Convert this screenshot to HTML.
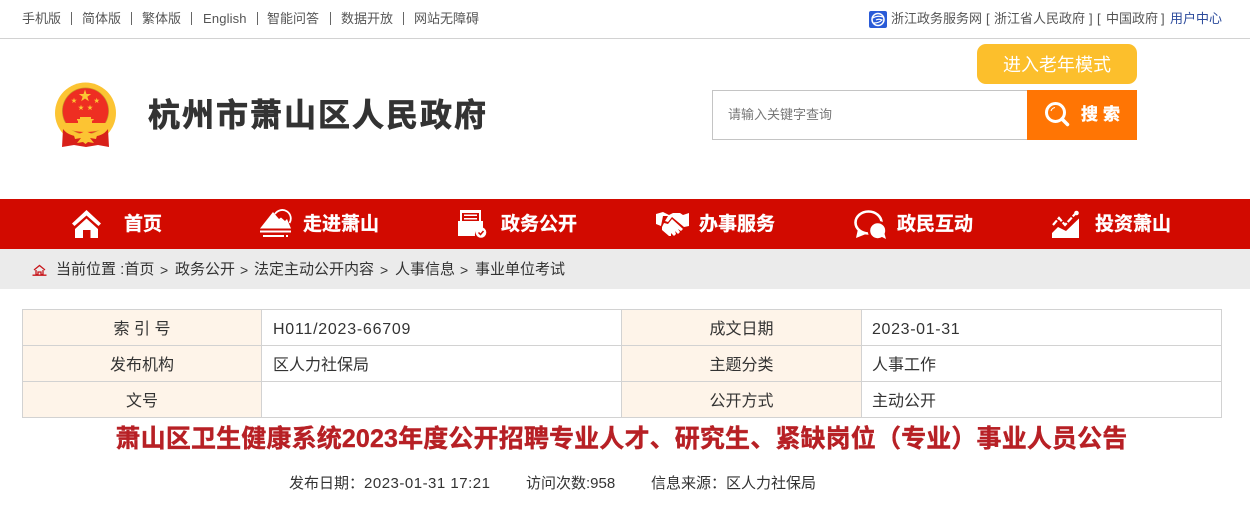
<!DOCTYPE html>
<html lang="zh-CN">
<head>
<meta charset="utf-8">
<title>杭州市萧山区人民政府</title>
<style>
html,body{margin:0;padding:0;background:#fff;}
body{width:1250px;height:515px;position:relative;overflow:hidden;font-family:"Liberation Sans","Noto Sans CJK SC",sans-serif;color:#333;}
.a{position:absolute;white-space:nowrap;}
.t{font-size:13px;line-height:18px;top:10px;color:#555;}
.sep{position:absolute;top:12px;width:1px;height:13px;background:#666;}
.nav{font-size:19px;font-weight:700;color:#fff;line-height:26px;top:212px;-webkit-text-stroke:.3px #fff;}
.bc{font-size:15px;line-height:20px;top:260px;color:#333;}
.c{position:absolute;box-sizing:border-box;font-size:16px;line-height:39px;height:35px;color:#333;white-space:nowrap;}
.l{background:#fef4e9;text-align:center;}
.v{padding-left:10px;letter-spacing:.65px;}
.h{position:absolute;background:#d2d2d2;}
.m{font-size:15px;line-height:20px;top:474px;color:#333;}
</style>
</head>
<body>
<div class="a t" style="left:22px">手机版</div><div class="sep" style="left:71px"></div>
<div class="a t" style="left:82px">简体版</div><div class="sep" style="left:131px"></div>
<div class="a t" style="left:142px">繁体版</div><div class="sep" style="left:191px"></div>
<div class="a t" style="left:203px;letter-spacing:.15px">English</div><div class="sep" style="left:257px"></div>
<div class="a t" style="left:267px">智能问答</div><div class="sep" style="left:330px"></div>
<div class="a t" style="left:341px">数据开放</div><div class="sep" style="left:403px"></div>
<div class="a t" style="left:414px">网站无障碍</div>

<svg class="a" style="left:869px;top:11px" width="18" height="17" viewBox="0 0 18 17"><rect width="18" height="17" rx="2" fill="#2a5bd7"/><circle cx="9" cy="8.500" r="6" fill="none" stroke="#fff" stroke-width="1.500"/><path d="M4 7c3-2 7-2 10-1M5 12c3 0 6-1 8-3-2-1-4-1-6 0" fill="none" stroke="#fff" stroke-width="1.200"/></svg>
<div class="a t" style="left:891px">浙江政务服务网</div>
<div class="a t" style="left:986px">[</div>
<div class="a t" style="left:994px">浙江省人民政府</div>
<div class="a t" style="left:1089px">]</div>
<div class="a t" style="left:1097px">[</div>
<div class="a t" style="left:1106px">中国政府</div>
<div class="a t" style="left:1161px">]</div>
<div class="a t" style="left:1170px;color:#2b4a9b">用户中心</div>
<div class="a" style="left:0;top:38px;width:1250px;height:1px;background:#d2d2d2"></div>

<svg class="a" style="left:54px;top:82px" width="64" height="68" viewBox="0 0 64 68">
<circle cx="31.500" cy="31" r="30.500" fill="#fcc433"/>
<circle cx="31.500" cy="29" r="23.500" fill="#c8972a"/>
<circle cx="31.500" cy="29" r="22.800" fill="#ee2e22"/>
<path d="M9.500 41 H53.500 C51 47 44 50 31.500 50 C19 50 12 47 9.500 41Z" fill="#fcc433"/>
<path d="M23 37h17l-1 1.500h-1v3h-14v-3h-1z" fill="#fcc433"/>
<path d="M26 35h11v2H26z" fill="#fcc433"/>
<polygon transform="translate(31 14) scale(6.500)" fill="#fcc433" points="0,-1 .225,-.309 .951,-.309 .363,.118 .588,.809 0,.382 -.588,.809 -.363,.118 -.951,-.309 -.225,-.309"/>
<polygon transform="translate(20 18.700) scale(3)" fill="#fcc433" points="0,-1 .225,-.309 .951,-.309 .363,.118 .588,.809 0,.382 -.588,.809 -.363,.118 -.951,-.309 -.225,-.309"/>
<polygon transform="translate(42.700 18.700) scale(3)" fill="#fcc433" points="0,-1 .225,-.309 .951,-.309 .363,.118 .588,.809 0,.382 -.588,.809 -.363,.118 -.951,-.309 -.225,-.309"/>
<polygon transform="translate(27 25.700) scale(3)" fill="#fcc433" points="0,-1 .225,-.309 .951,-.309 .363,.118 .588,.809 0,.382 -.588,.809 -.363,.118 -.951,-.309 -.225,-.309"/>
<polygon transform="translate(36 25.700) scale(3)" fill="#fcc433" points="0,-1 .225,-.309 .951,-.309 .363,.118 .588,.809 0,.382 -.588,.809 -.363,.118 -.951,-.309 -.225,-.309"/>
<path d="M9 47 C12 51 16 53 21 54 L43 54 C48 53 51 51 54 47 L55 65 L44 63 L32 65 L20 63 L8 65Z" fill="#d8201a"/>
<path d="M19 50 L25 52 L31.500 49 L38 52 L44 50 L42 57 L36 56 L40 61 L34 60 L31.500 62 L29 60 L23 61 L27 56 L21 57Z" fill="#fcc433"/>
</svg>
<div class="a" style="left:148px;top:93px;font-size:32px;line-height:44px;font-weight:700;letter-spacing:2px;color:#333;-webkit-text-stroke:.7px #333">杭州市萧山区人民政府</div>

<div class="a" style="left:977px;top:44px;width:160px;height:40px;border-radius:9px;background:#fcbf2c;color:#fff;font-size:18px;line-height:42px;text-align:center">进入老年模式</div>
<div class="a" style="left:712px;top:90px;width:316px;height:50px;box-sizing:border-box;border:1px solid #c4c4c4;border-right:0"></div>
<div class="a" style="left:728px;top:106px;font-size:13px;line-height:18px;color:#777">请输入关键字查询</div>
<div class="a" style="left:1027px;top:90px;width:110px;height:50px;background:#ff7504"></div>
<svg class="a" style="left:1044px;top:101px" width="26" height="26" viewBox="0 0 26 26"><circle cx="11.500" cy="11.500" r="9" fill="none" stroke="#fff" stroke-width="3"/><path d="M18 18l5.500 5.500" stroke="#fff" stroke-width="3.500" stroke-linecap="round"/><path d="M7 10a5 5 0 0 1 4-3.500" stroke="#fff" fill="none" stroke-width="1"/></svg>
<div class="a" style="left:1081px;top:103px;font-size:17px;line-height:24px;font-weight:700;color:#fff;letter-spacing:5px;-webkit-text-stroke:.4px #fff">搜索</div>

<div class="a" style="left:0;top:199px;width:1250px;height:50px;background:#d20a00"></div>

<svg class="a" style="left:71px;top:209px" width="32" height="30" viewBox="0 0 32 30" fill="#fff"><path d="M15.500 1 L30 14.500 L27.500 17 L15.500 6.500 L3.500 17 L1 14.500Z"/><path d="M15.500 9.500 L27 20 V29 H19.500 V21 H12 V29 H4 V20Z"/></svg>
<div class="a nav" style="left:124px">首页</div>

<svg class="a" style="left:259px;top:209px" width="34" height="30" viewBox="0 0 34 30" fill="#fff"><path d="M1 19.500 L14 3 L20 10 L22 8.500 L26 12 L28 10 L32 19.500Z"/><path d="M16 5 A8.500 8.500 0 1 1 30.500 14" fill="none" stroke="#fff" stroke-width="1.800"/><rect x="1" y="21.500" width="31" height="2"/><rect x="4" y="26" width="21" height="2"/><rect x="27" y="26" width="2" height="2"/></svg>
<div class="a nav" style="left:303px">走进萧山</div>

<svg class="a" style="left:458px;top:209px" width="30" height="30" viewBox="0 0 30 30"><path d="M0 12 H2 V1 H23 V12 H25 V19 A7 7 0 0 0 17 27 H0Z" fill="#fff"/><rect x="4" y="4" width="17" height="8" fill="#d20a00"/><rect x="6" y="5.500" width="13" height="1.500" fill="#fff"/><rect x="6" y="9" width="13" height="1.500" fill="#fff"/><circle cx="23" cy="23.500" r="5.300" fill="#fff"/><path d="M20.500 23.500l2 2 3-3.500" stroke="#d20a00" stroke-width="1.500" fill="none"/></svg>
<div class="a nav" style="left:501px">政务公开</div>

<svg class="a" style="left:656px;top:211px" width="34" height="26" viewBox="0 0 34 26" fill="#fff"><path d="M0 3 L7 1 L13 4 L17 2 L24 2 L27 4 L33 2 V15 L28 16 L16 6 L12 11 L9 10 L12 5 L7 5 L5 15 L0 13Z"/><path d="M6 16 L8 12 L12 13 L16 8 L27 18 L25 20 L22 18 L24 21 L22 23 L19 20 L20 23 L18 25 L15 22 L15 25 L13 25 L6 19Z"/></svg>
<div class="a nav" style="left:699px">办事服务</div>

<svg class="a" style="left:854px;top:210px" width="33" height="30" viewBox="0 0 33 30"><ellipse cx="14.500" cy="12.500" rx="13" ry="11" fill="none" stroke="#fff" stroke-width="2.600"/><path d="M4 19 L2 28 L12 24Z" fill="#fff"/><circle cx="23.700" cy="20.700" r="10" fill="#d20a00"/><circle cx="23.700" cy="20.700" r="7.500" fill="#fff"/><path d="M26 26 L32 29 L30 22Z" fill="#fff"/></svg>
<div class="a nav" style="left:897px">政民互动</div>

<svg class="a" style="left:1052px;top:210px" width="28" height="29" viewBox="0 0 28 29"><path d="M0 23 L6 17 L14 21 L27 8.500 V28 H0Z" fill="#fff"/><path d="M1 15 L7 8 L13 15 L23 4" stroke="#fff" stroke-width="2.200" fill="none" stroke-dasharray="6 1.500"/><circle cx="24.500" cy="3" r="2.300" fill="#fff"/></svg>
<div class="a nav" style="left:1095px">投资萧山</div>

<div class="a" style="left:0;top:249px;width:1250px;height:40px;background:#ebebeb"></div>
<svg class="a" style="left:32px;top:264px" width="15" height="12" viewBox="0 0 15 12"><path d="M2 6 L7.500 1.500 L13 6 M4 6 V10.500 H6 V8 H9 V10.500 H11 V6 M0.500 11.200 H14.500" fill="none" stroke="#c8171c" stroke-width="1.300"/></svg>
<div class="a bc" style="left:56px">当前位置 :首页</div>
<div class="a bc" style="left:160px;font-size:14px">&gt;</div><div class="a bc" style="left:175px">政务公开</div>
<div class="a bc" style="left:240px;font-size:14px">&gt;</div><div class="a bc" style="left:254px">法定主动公开内容</div>
<div class="a bc" style="left:380px;font-size:14px">&gt;</div><div class="a bc" style="left:395px">人事信息</div>
<div class="a bc" style="left:460px;font-size:14px">&gt;</div><div class="a bc" style="left:475px">事业单位考试</div>

<div class="c l" style="left:23px;top:310px;width:238px">索 引 号</div>
<div class="c v" style="left:263px;top:310px;letter-spacing:.75px">H011/2023-66709</div>
<div class="c l" style="left:622px;top:310px;width:239px">成文日期</div>
<div class="c v" style="left:862px;top:310px">2023-01-31</div>
<div class="c l" style="left:23px;top:346px;width:238px">发布机构</div>
<div class="c v" style="left:263px;top:346px;letter-spacing:0">区人力社保局</div>
<div class="c l" style="left:622px;top:346px;width:239px">主题分类</div>
<div class="c v" style="left:862px;top:346px;letter-spacing:0">人事工作</div>
<div class="c l" style="left:23px;top:382px;width:238px">文号</div>
<div class="c l" style="left:622px;top:382px;width:239px">公开方式</div>
<div class="c v" style="left:862px;top:382px;letter-spacing:0">主动公开</div>

<div class="h" style="left:22px;top:309px;width:1200px;height:1px"></div>
<div class="h" style="left:22px;top:345px;width:1200px;height:1px"></div>
<div class="h" style="left:22px;top:381px;width:1200px;height:1px"></div>
<div class="h" style="left:22px;top:417px;width:1200px;height:1px"></div>
<div class="h" style="left:22px;top:309px;width:1px;height:109px"></div>
<div class="h" style="left:261px;top:309px;width:1px;height:109px"></div>
<div class="h" style="left:621px;top:309px;width:1px;height:109px"></div>
<div class="h" style="left:861px;top:309px;width:1px;height:109px"></div>
<div class="h" style="left:1221px;top:309px;width:1px;height:109px"></div>

<div class="a" style="left:0;top:422px;width:1243px;text-align:center;font-size:25px;line-height:34px;font-weight:700;letter-spacing:.15px;color:#b72025;-webkit-text-stroke:.4px #b72025">萧山区卫生健康系统2023年度公开招聘专业人才、研究生、紧缺岗位（专业）事业人员公告</div>

<div class="a m" style="left:289px">发布日期：<span style="letter-spacing:.5px">2023-01-31 17:21</span></div>
<div class="a m" style="left:526px">访问次数:958</div>
<div class="a m" style="left:651px">信息来源：区人力社保局</div>
</body>
</html>
